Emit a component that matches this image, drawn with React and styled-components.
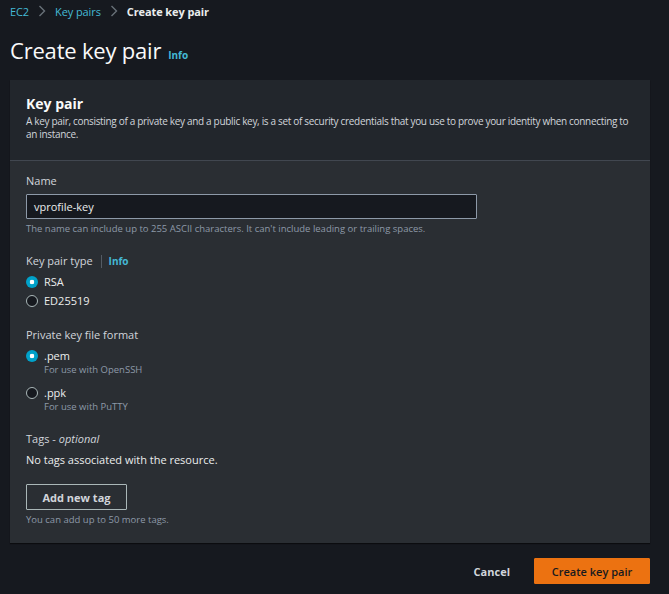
import styled, { createGlobalStyle } from "styled-components";

const GlobalStyle = createGlobalStyle`
  html, body {
    margin: 0;
    padding: 0;
    background: #16191f;
  }
  body {
    font-family: "Open Sans", "Noto Sans", Arial, sans-serif;
    color: #d1d5db;
  }
`;

const Page = styled.div`
  width: 669px;
  height: 594px;
  box-sizing: border-box;
  padding: 2px 19px 0 10px;
  background: #16191f;
  overflow: hidden;
`;

const Breadcrumbs = styled.nav`
  display: flex;
  align-items: center;
  gap: 9px;
  font-size: 11px;
  height: 18px;
`;

const Crumb = styled.a`
  color: ${(p) => (p.$current ? "#eaeded" : "#44b9d6")};
  font-weight: ${(p) => (p.$current ? 700 : 400)};
  text-decoration: none;
  letter-spacing: -0.1px;
`;

const Chevron = styled.span`
  display: flex;
  color: #687078;
`;

const TitleRow = styled.div`
  display: flex;
  align-items: baseline;
  gap: 7px;
  margin-top: 15px;
  height: 45px;
`;

const Title = styled.h1`
  margin: 0;
  font-size: 22px;
  font-weight: 400;
  color: #fafafa;
  letter-spacing: -0.2px;
`;

const Info = styled.a`
  color: #44b9d6;
  font-size: 10px;
  font-weight: 700;
  text-decoration: none;
`;

const Container = styled.section`
  background: #2a2e33;
  box-shadow: 0 1px 1px rgba(0, 0, 0, 0.5);
`;

const Header = styled.header`
  background: #22262c;
  padding: 14px 16px 19px;
  border-bottom: 1px solid #414750;
`;

const HeaderTitle = styled.h2`
  margin: 0;
  font-size: 14px;
  font-weight: 700;
  color: #fafafa;
  line-height: 20px;
`;

const HeaderDesc = styled.p`
  margin: 1px 0 0;
  font-size: 10px;
  line-height: 13px;
  letter-spacing: -0.32px;
  color: #d1d5db;
`;

const Body = styled.div`
  padding: 12px 16px 17px;
  display: flex;
  flex-direction: column;
`;

const Field = styled.div`
  display: flex;
  flex-direction: column;
  margin-bottom: ${(p) => p.$gap || 0}px;
`;

const Label = styled.div`
  display: flex;
  align-items: center;
  font-size: 11px;
  line-height: 16px;
  color: #d1d5db;
  margin-bottom: ${(p) => p.$mb || 5}px;
`;

const LabelDivider = styled.span`
  width: 1px;
  height: 13px;
  background: #545b64;
  margin: 0 7px 0 8px;
`;

const Optional = styled.i`
  font-style: italic;
  margin-left: 3px;
`;

const Input = styled.div`
  width: 451px;
  height: 25px;
  box-sizing: border-box;
  border: 1px solid #8d99a8;
  background: #16191f;
  border-radius: 1px;
  padding: 0 7px;
  display: flex;
  align-items: center;
  font-size: 11px;
  color: #eaeded;
`;

const Hint = styled.div`
  font-size: 9.5px;
  line-height: 13px;
  color: #8d99a8;
  margin-top: ${(p) => p.$mt || 3}px;
`;

const RadioGroup = styled.div`
  display: flex;
  flex-direction: column;
  gap: ${(p) => p.$gap}px;
`;

const RadioRow = styled.label`
  display: flex;
  align-items: flex-start;
  gap: 6px;
`;

const Dot = styled.span`
  width: 12px;
  height: 12px;
  margin-top: 2px;
  border-radius: 50%;
  flex: none;
  box-sizing: border-box;
  ${(p) =>
    p.$on
      ? `background: radial-gradient(circle, #fff 0 2px, #00a1c9 2.6px);`
      : `border: 1px solid #aab7b8; background: #16191f;`}
`;

const RadioText = styled.div`
  display: flex;
  flex-direction: column;
`;

const RadioLabel = styled.span`
  font-size: 11px;
  line-height: 16px;
  color: #eaeded;
`;

const RadioDesc = styled.span`
  font-size: 9.5px;
  line-height: 12px;
  color: #8d99a8;
`;

const Plain = styled.div`
  font-size: 11px;
  line-height: 16px;
  color: #eaeded;
`;

const OutlineButton = styled.button`
  align-self: flex-start;
  height: 26px;
  width: 101px;
  padding: 0;
  margin-top: 16px;
  background: transparent;
  border: 1px solid #aab7b8;
  border-radius: 1px;
  color: #d1d5db;
  font-family: inherit;
  font-size: 11px;
  font-weight: 700;
`;

const Actions = styled.div`
  display: flex;
  justify-content: flex-end;
  align-items: center;
  gap: 24px;
  margin-top: 15px;
`;

const LinkButton = styled.button`
  background: none;
  border: none;
  padding: 0;
  color: #d1d5db;
  font-family: inherit;
  font-size: 11px;
  font-weight: 700;
`;

const PrimaryButton = styled.button`
  height: 26px;
  width: 116px;
  background: #ec7211;
  border: 1px solid #ec7211;
  border-radius: 1px;
  color: #16191f;
  font-family: inherit;
  font-size: 11px;
  font-weight: 600;
`;

const ChevronIcon = () => (
  <Chevron>
    <svg width="8" height="12" viewBox="0 0 8 12" fill="none">
      <path d="M1.5 1 L6.5 6 L1.5 11" stroke="currentColor" strokeWidth="1.4" />
    </svg>
  </Chevron>
);

function Radio({ on, label, desc }) {
  return (
    <RadioRow>
      <Dot $on={on} />
      <RadioText>
        <RadioLabel>{label}</RadioLabel>
        {desc && <RadioDesc>{desc}</RadioDesc>}
      </RadioText>
    </RadioRow>
  );
}

export default function App() {
  return (
    <Page>
      <GlobalStyle />
      <Breadcrumbs>
        <Crumb href="#">EC2</Crumb>
        <ChevronIcon />
        <Crumb href="#">Key pairs</Crumb>
        <ChevronIcon />
        <Crumb $current>Create key pair</Crumb>
      </Breadcrumbs>
      <TitleRow>
        <Title>Create key pair</Title>
        <Info href="#">Info</Info>
      </TitleRow>
      <Container>
        <Header>
          <HeaderTitle>Key pair</HeaderTitle>
          <HeaderDesc>
            A key pair, consisting of a private key and a public key, is a set of security credentials that you use to prove your identity when connecting to an instance.
          </HeaderDesc>
        </Header>
        <Body>
          <Field $gap={18}>
            <Label $mb={5}>Name</Label>
            <Input>vprofile-key</Input>
            <Hint>The name can include up to 255 ASCII characters. It can't include leading or trailing spaces.</Hint>
          </Field>
          <Field $gap={18}>
            <Label $mb={5}>
              Key pair type
              <LabelDivider />
              <Info href="#">Info</Info>
            </Label>
            <RadioGroup $gap={3}>
              <Radio on label="RSA" />
              <Radio label="ED25519" />
            </RadioGroup>
          </Field>
          <Field $gap={18}>
            <Label $mb={5}>Private key file format</Label>
            <RadioGroup $gap={9}>
              <Radio on label=".pem" desc="For use with OpenSSH" />
              <Radio label=".ppk" desc="For use with PuTTY" />
            </RadioGroup>
          </Field>
          <Field>
            <Label $mb={5}>
              Tags - <Optional>optional</Optional>
            </Label>
            <Plain>No tags associated with the resource.</Plain>
            <OutlineButton>Add new tag</OutlineButton>
            <Hint $mt={3}>You can add up to 50 more tags.</Hint>
          </Field>
        </Body>
      </Container>
      <Actions>
        <LinkButton>Cancel</LinkButton>
        <PrimaryButton>Create key pair</PrimaryButton>
      </Actions>
    </Page>
  );
}
